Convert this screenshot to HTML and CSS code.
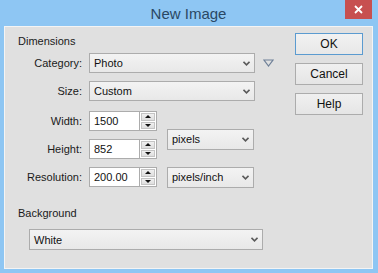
FILE: index.html
```html
<!DOCTYPE html>
<html lang="en">
<head>
    <meta charset="UTF-8">
    <title>New Image</title>
    <link rel="stylesheet" href="styles.css">
</head>
<body>
    <div class="window">
        <div class="titlebar">
            <span class="title">New Image</span>
            <span class="close">
                <svg width="9" height="9" viewBox="0 0 9 9"><path d="M1 1 L8 8 M8 1 L1 8" stroke="#fff" stroke-width="1.8"/></svg>
            </span>
        </div>

        <div class="content">
            <div class="form">
                <div class="group-title">Dimensions</div>

                <div class="row">
                    <span class="label">Category:</span>
                    <div class="select wide">
                        <span>Photo</span>
                        <svg class="chevron" width="7" height="5" viewBox="0 0 7 5"><path d="M0.5 0.8 L3.5 3.8 L6.5 0.8" fill="none" stroke="#5a5a5a" stroke-width="1.6"/></svg>
                    </div>
                    <svg class="preset" width="11" height="8" viewBox="0 0 11 8"><path d="M1 1 L10 1 L5.5 7 Z" fill="none" stroke="#6f8098" stroke-width="1.2"/></svg>
                </div>

                <div class="row row-size">
                    <span class="label">Size:</span>
                    <div class="select wide">
                        <span>Custom</span>
                        <svg class="chevron" width="7" height="5" viewBox="0 0 7 5"><path d="M0.5 0.8 L3.5 3.8 L6.5 0.8" fill="none" stroke="#5a5a5a" stroke-width="1.6"/></svg>
                    </div>
                </div>

                <div class="unit-group">
                    <div class="unit-rows">
                        <div class="row">
                            <span class="label">Width:</span>
                            <div class="spinbox">
                                <span class="value">1500</span>
                                <span class="spin"><span class="up"></span><span class="down"></span></span>
                            </div>
                        </div>
                        <div class="row">
                            <span class="label">Height:</span>
                            <div class="spinbox">
                                <span class="value">852</span>
                                <span class="spin"><span class="up"></span><span class="down"></span></span>
                            </div>
                        </div>
                    </div>
                    <div class="select unit">
                        <span>pixels</span>
                        <svg class="chevron" width="7" height="5" viewBox="0 0 7 5"><path d="M0.5 0.8 L3.5 3.8 L6.5 0.8" fill="none" stroke="#5a5a5a" stroke-width="1.6"/></svg>
                    </div>
                </div>

                <div class="row row-res">
                    <span class="label">Resolution:</span>
                    <div class="spinbox">
                        <span class="value">200.00</span>
                        <span class="spin"><span class="up"></span><span class="down"></span></span>
                    </div>
                    <div class="select unit">
                        <span>pixels/inch</span>
                        <svg class="chevron" width="7" height="5" viewBox="0 0 7 5"><path d="M0.5 0.8 L3.5 3.8 L6.5 0.8" fill="none" stroke="#5a5a5a" stroke-width="1.6"/></svg>
                    </div>
                </div>

                <div class="group-title">Background</div>
                <div class="select background">
                    <span>White</span>
                    <svg class="chevron" width="7" height="5" viewBox="0 0 7 5"><path d="M0.5 0.8 L3.5 3.8 L6.5 0.8" fill="none" stroke="#5a5a5a" stroke-width="1.6"/></svg>
                </div>
            </div>

            <div class="buttons">
                <div class="button default">OK</div>
                <div class="button">Cancel</div>
                <div class="button">Help</div>
            </div>
        </div>
    </div>
</body>
</html>
```

FILE: styles.css
```css
* {
    margin: 0;
    padding: 0;
    box-sizing: border-box;
}

body {
    font-family: 'Liberation Sans', Arial, sans-serif;
    font-size: 11px;
    color: #1a1a1a;
}

.window {
    width: 378px;
    height: 273px;
    background: #8ec6f3;
    padding: 0 5px 4px 4px;
    display: flex;
    flex-direction: column;
}

.titlebar {
    height: 26px;
    display: flex;
    align-items: center;
    justify-content: center;
    position: relative;
}

.title {
    font-size: 15px;
    color: #2a4864;
}

.close {
    position: absolute;
    top: 0;
    right: 1px;
    width: 27px;
    height: 19px;
    background: #c75050;
    display: flex;
    align-items: center;
    justify-content: center;
}

.content {
    flex: 1;
    background: #e0e0e0;
    border: 1px solid #f4f4f4;
    display: flex;
}

.form {
    flex: 1;
    padding: 7px 0 0 13px;
}

.group-title {
    line-height: 14px;
    margin-bottom: 5px;
}

.row {
    display: flex;
    align-items: center;
    height: 20px;
    margin-bottom: 8px;
}

.row-size {
    margin-bottom: 10px;
}

.row-res {
    margin-bottom: 19px;
}

.row-res + .group-title {
    margin-bottom: 9px;
}

.label {
    width: 64px;
    margin-right: 7px;
    text-align: right;
}

.select {
    height: 20px;
    border: 1px solid #acacac;
    background: linear-gradient(#f3f3f3, #e8e8e8);
    display: flex;
    align-items: center;
    justify-content: space-between;
    padding: 0 4px 0 4px;
    color: #111;
}

.select.wide {
    width: 166px;
}

.select.unit {
    width: 87px;
    height: 21px;
    margin-left: 10px;
}

.select.background {
    width: 234px;
    height: 21px;
    margin-left: 11px;
}

.preset {
    margin-left: 8px;
}

.spinbox {
    width: 68px;
    height: 20px;
    display: flex;
}

.spinbox .value {
    flex: 1;
    background: #fff;
    border: 1px solid #acacac;
    padding-left: 4px;
    line-height: 18px;
    color: #111;
}

.spin {
    width: 17px;
    display: flex;
    flex-direction: column;
    border: 1px solid #acacac;
    border-left: none;
    background: #fff;
    padding: 1px;
    gap: 1px;
}

.spin .up,
.spin .down {
    flex: 1;
    background: linear-gradient(#f0f0f0, #dedede);
    border: 1px solid #c4c4c4;
    display: flex;
    align-items: center;
    justify-content: center;
}

.spin .up::after {
    content: "";
    border-left: 3px solid transparent;
    border-right: 3px solid transparent;
    border-bottom: 3px solid #111;
}

.spin .down::after {
    content: "";
    border-left: 3px solid transparent;
    border-right: 3px solid transparent;
    border-top: 3px solid #111;
}

.unit-group {
    display: flex;
    align-items: center;
}

.buttons {
    width: 68px;
    margin: 6px 9px 0 0;
    display: flex;
    flex-direction: column;
    gap: 8px;
}

.button {
    height: 22px;
    border: 1px solid #acacac;
    background: linear-gradient(#f0f0f0, #e5e5e5);
    display: flex;
    align-items: center;
    justify-content: center;
    font-size: 12px;
    color: #111;
}

.button.default {
    border-color: #5b9bd0;
    background: linear-gradient(#f2f2f2, #e8e8e8);
}
```
